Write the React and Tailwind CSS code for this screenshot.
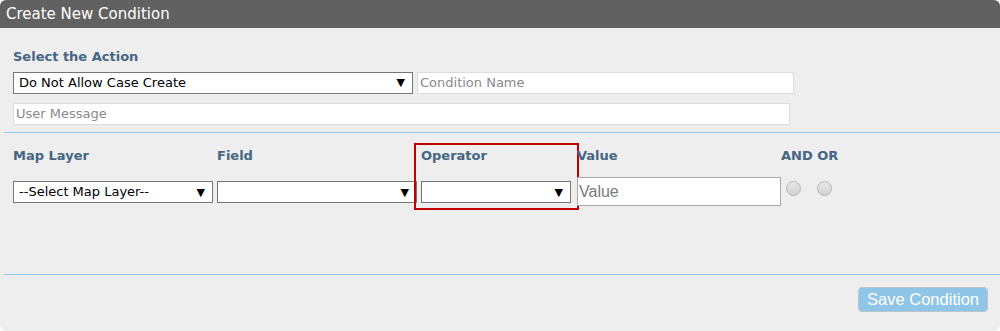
import React from 'react';

// ======================== SMALL PIECES ========================
const Caret = () => (
  <span className="text-[11px] leading-none text-black">▼</span>
);

const SelectBox = ({ value = "", className = "" }) => (
  <div className={`h-[22px] bg-white border border-[#767676] flex items-center justify-between pl-[5px] pr-[7px] ${className}`}>
    <span className="text-[13px] text-black">{value}</span>
    <Caret />
  </div>
);

const TextBox = ({ placeholder, className = "" }) => (
  <div className={`h-[22px] bg-white border border-[#dcdcdc] flex items-center pl-[2px] ${className}`}>
    <span className="text-[13px] text-[#8a8a8a]">{placeholder}</span>
  </div>
);

const Label = ({ children, className = "" }) => (
  <div className={`text-[13px] font-bold text-[#456584] ${className}`}>{children}</div>
);

const Radio = () => (
  <div className="w-[15px] h-[15px] rounded-full border border-[#b5b5b5] bg-gradient-to-b from-[#e6e6e6] to-[#d2d2d2]" />
);

// ======================== MAIN ========================
export default function App() {
  return (
    <div className="w-[1000px] h-[331px] bg-white" style={{ fontFamily: '"DejaVu Sans", Verdana, sans-serif' }}>
      <div className="h-full bg-[#eeeeee] rounded-[6px] overflow-hidden flex flex-col">
        {/* Title bar */}
        <div className="h-[28px] bg-[#616161] text-white text-[15px] pl-[6px] flex items-center shrink-0">
          Create New Condition
        </div>

        {/* Action section */}
        <div className="pl-[13px] pt-[19px]">
          <Label>Select the Action</Label>
          <div className="flex items-center gap-[4px] mt-[5px]">
            <SelectBox value="Do Not Allow Case Create" className="w-[400px]" />
            <TextBox placeholder="Condition Name" className="w-[377px]" />
          </div>
          <TextBox placeholder="User Message" className="w-[777px] mt-[9px]" />
        </div>

        <div className="h-px bg-[#8fccf3] ml-[4px] mt-[7px]" />

        {/* Condition row */}
        <div className="pl-[13px] flex h-[141px]">
          <div className="w-[204px] pt-[13px]">
            <Label>Map Layer</Label>
            <SelectBox value="--Select Map Layer--" className="w-[200px] mt-[16px]" />
          </div>
          <div className="w-[197px] pt-[13px]">
            <Label>Field</Label>
            <SelectBox className="w-[200px] mt-[16px]" />
          </div>
          <div className="w-[165px] h-[67px] mt-[10px] border-2 border-[#c00000] pl-[5px] pt-[1px]">
            <Label>Operator</Label>
            <SelectBox className="w-[150px] mt-[16px]" />
          </div>
          <div className="w-[203px] pt-[13px] -ml-[2px]">
            <Label>Value</Label>
            <div className="h-[29px] w-[204px] mt-[12px] bg-white border border-[#a9a9a9] flex items-center pl-[1px]">
              <span className="text-[16px] text-[#7a7a7a]" style={{ fontFamily: '"Liberation Sans", Arial, sans-serif' }}>Value</span>
            </div>
          </div>
          <div className="pt-[13px] pl-[1px]">
            <Label>AND OR</Label>
            <div className="flex gap-[16px] mt-[16px] pl-[5px]">
              <Radio />
              <Radio />
            </div>
          </div>
        </div>

        <div className="h-px bg-[#8fccf3] ml-[4px]" />

        {/* Footer */}
        <div className="flex justify-end pr-[12px] pt-[12px]">
          <div
            className="h-[25px] px-[8px] flex items-center bg-[#8fc5e6] border border-[#b9c4cc] rounded-[4px] text-white text-[16.5px]"
            style={{ fontFamily: '"Liberation Sans", Arial, sans-serif' }}
          >
            Save Condition
          </div>
        </div>
      </div>
    </div>
  );
}
